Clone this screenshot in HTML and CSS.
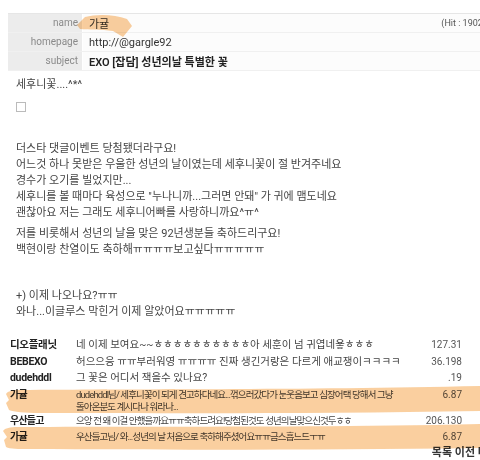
FILE: index.html
```html
<!DOCTYPE html>
<html lang="ko">
<head>
<meta charset="utf-8">
<link rel="stylesheet" href="styles.css">
</head>
<body>
<div class="page">
  <div class="info">
    <div class="row">
      <div class="label">name</div>
      <div class="value"><span>가귤</span><span class="hit">(Hit : 1902)</span></div>
    </div>
    <div class="row">
      <div class="label">homepage</div>
      <div class="value">http://@gargle92</div>
    </div>
    <div class="row">
      <div class="label">subject</div>
      <div class="value subject">EXO [잡담] 성년의날 특별한 꽃</div>
    </div>
  </div>

  <div class="article">
    <p class="first">세후니꽃....^*^</p>
    <div class="broken"></div>
    <p class="para">더스타 댓글이벤트 당첨됐더라구요!<br>어느것 하나 못받은 우울한 성년의 날이였는데 세후니꽃이 절 반겨주네요<br>경수가 오기를 빌었지만...<br>세후니를 볼 때마다 육성으로 "누나니까...그러면 안돼" 가 귀에 맴도네요<br>괜찮아요 저는 그래도 세후니어빠를 사랑하니까요^ㅠ^</p>
    <p class="para second">저를 비롯해서 성년의 날을 맞은 92년생분들 축하드리구요!<br>백현이랑 찬열이도 축하해ㅠㅠㅠㅠ보고싶다ㅠㅠㅠㅠㅠ</p>
    <p class="para late">+) 이제 나오나요?ㅠㅠ<br>와나...이글루스 막힌거 이제 알았어요ㅠㅠㅠㅠㅠ</p>
  </div>

  <div class="comments">
    <div class="c"><span class="who">디오플래닛</span><span class="txt">네 이제 보여요~~ㅎㅎㅎㅎㅎㅎㅎㅎㅎㅎ아 세훈이 넘 귀엽네욯ㅎㅎㅎ</span><span class="ip">127.31</span></div>
    <div class="c"><span class="who">BEBEXO</span><span class="txt">허으으응 ㅠㅠ부러워영 ㅠㅠㅠㅠ 진짜 생긴거랑은 다르게 애교쟁이ㅋㅋㅋㅋ</span><span class="ip">36.198</span></div>
    <div class="c"><span class="who">dudehddl</span><span class="txt">그 꽃은 어디서 잭을수 있나요?</span><span class="ip">.19</span></div>
    <div class="c narrow"><span class="who">가귤</span><span class="txt">dudehddl님/ 세후니꽃이 되게 견고하다네요...꺾으러갔다가 눈웃음보고 심장어택 당해서 그냥<br>돌아온분도 계시다나 워라나...</span><span class="ip">6.87</span></div>
    <div class="c narrow"><span class="who">우산들고</span><span class="txt">으앙 전 왜 이걸 안했을까요ㅠㅠ축하드려요!당첨된것도 성년의날맞으신것두ㅎㅎ</span><span class="ip">206.130</span></div>
    <div class="c narrow"><span class="who">가귤</span><span class="txt">우산들고님/ 와...성년의 날 처음으로 축하해주셨어요ㅠㅠ금스흡느드ㅜㅠ</span><span class="ip">6.87</span></div>
  </div>

  <div class="nav">목록 이전 다음</div>

  <svg class="marks" width="480" height="460" viewBox="0 0 480 460" aria-hidden="true">
    <path d="M77,25 L85,17 C96,14 114,14 127,19 L132,26 L123,37 L113,31 C101,29 89,30 80,29 Z"/>
    <path d="M6,394 C8,391 12,390 20,390 C120,389 300,390 480,386 L480,411 C320,414 160,413 40,413 C24,413 14,412 9,410 L6,403 L9,400 Z"/>
    <path d="M3,431 C5,428 10,427 18,427 C140,426 300,428 480,424 L480,448 C330,450 170,450 30,449 C18,449 10,449 6,447 L4,440 L7,437 Z"/>
  </svg>
</div>
</body>
</html>
```

FILE: styles.css
```css
html, body {
  margin: 0;
  padding: 0;
  background: #fff;
  overflow: hidden;
}
body {
  width: 480px;
  height: 460px;
  font-family: Roboto, "Noto Sans CJK KR", sans-serif;
  color: #444;
  font-size: 11px;
}
.page {
  position: relative;
  width: 480px;
  height: 460px;
  overflow: hidden;
  padding-top: 13px;
  box-sizing: border-box;
}
.info {
  margin-left: 8px;
  width: 486px;
  border-top: 1px solid #e6e6e6;
}
.row {
  display: grid;
  grid-template-columns: 74px 1fr;
  column-gap: 1px;
  height: 18px;
  border-bottom: 1px solid #f0f0f0;
}
.label {
  background: #ececec;
  color: #8a8a8a;
  font-size: 10px;
  text-align: right;
  padding-right: 4px;
  line-height: 17px;
}
.value {
  display: flex;
  align-items: center;
  padding-left: 6px;
  padding-right: 8px;
  color: #333;
  font-size: 11px;
  background: #fcfcfc;
  white-space: nowrap;
}
.value.subject {
  font-weight: 600;
  color: #222;
}
.hit {
  margin-left: auto;
  font-size: 9px;
  color: #555;
}
.article {
  margin-left: 16px;
  line-height: 16px;
  color: #444;
}
.article p {
  margin: 0;
}
.article .first {
  margin-top: 6px;
}
.broken {
  width: 8px;
  height: 8px;
  border: 1px solid #bbb;
  margin-top: 9px;
}
.article .para {
  margin-top: 29px;
}
.article .second {
  margin-top: 5px;
}
.article .late {
  margin-top: 30px;
}
.comments {
  margin-top: 17px;
  padding-left: 10px;
  padding-right: 18px;
  display: flex;
  flex-direction: column;
}
.c {
  display: grid;
  grid-template-columns: 66px 1fr 38px;
  min-height: 16.5px;
  align-items: start;
  font-size: 10.5px;
}
.who {
  font-weight: 700;
  color: #222;
  line-height: 16.5px;
  letter-spacing: -0.3px;
}
.txt {
  color: #444;
  line-height: 12px;
  padding-top: 2px;
  padding-right: 8px;
}
.ip {
  font-size: 10px;
  color: #555;
  text-align: right;
  line-height: 16.5px;
}
.narrow .who {
  font-size: 10px;
  letter-spacing: -0.8px;
}
.narrow .txt {
  font-size: 9.5px;
  letter-spacing: -0.9px;
  white-space: nowrap;
  padding-right: 0;
}
.nav {
  text-align: right;
  margin-top: 0;
  margin-right: -18px;
  font-weight: 700;
  color: #333;
  font-size: 11px;
  line-height: 14px;
  white-space: nowrap;
}
.marks {
  position: absolute;
  left: 0;
  top: 0;
  pointer-events: none;
  mix-blend-mode: multiply;
}
.marks path {
  fill: #f7b66c;
  opacity: 0.65;
}
```
